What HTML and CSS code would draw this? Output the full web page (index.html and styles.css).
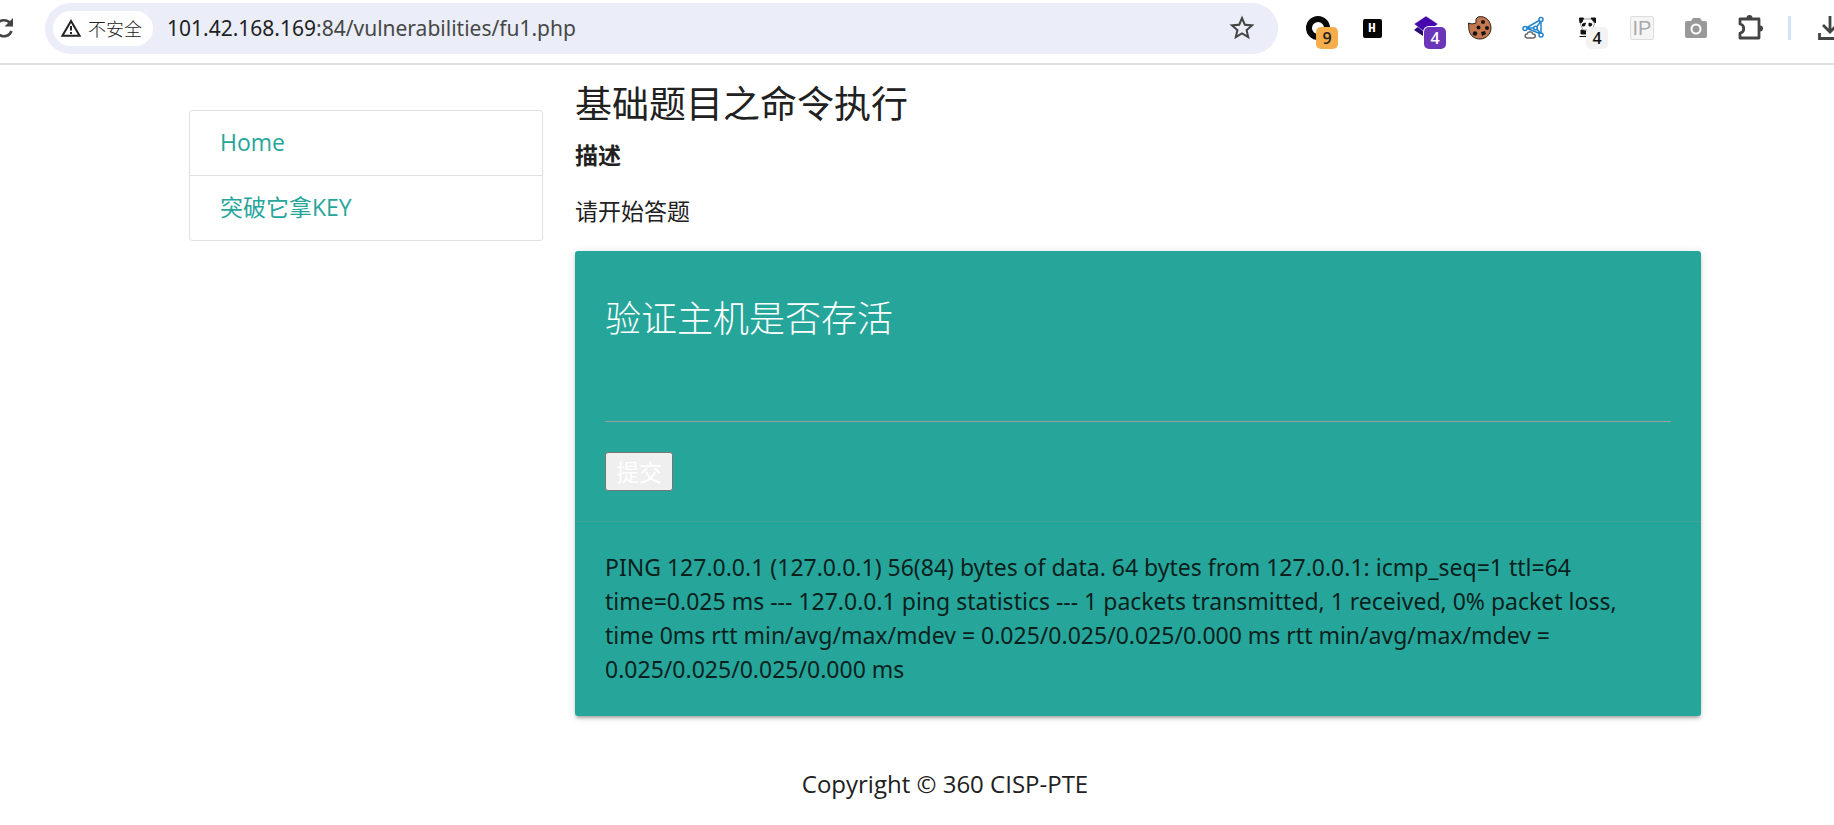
FILE: index.html
```html
<!DOCTYPE html>
<html lang="zh-CN">
<head>
    <meta charset="UTF-8">
    <meta name="viewport" content="width=device-width, initial-scale=1.0">
    <title>基础题目之命令执行</title>
    <link rel="stylesheet" href="styles.css">
</head>
<body>
    <header class="toolbar">
        <button class="tool reload" type="button" aria-label="重新加载">
            <svg width="14" height="24" viewBox="10 0 14 24"><path d="M20 7A8 8 0 1 0 21.500 15" fill="none" stroke="#444" stroke-width="2.600"/><path d="M23 2v8.500h-8.500z" fill="#444"/></svg>
        </button>
        <div class="omnibox">
            <button class="chip" type="button">
                <svg width="22" height="20" viewBox="0 0 22 20"><path d="M11 3L19.600 17.800H2.400z" fill="none" stroke="#222" stroke-width="2"/><path d="M11 8v4.600M11 14v2" stroke="#222" stroke-width="2"/></svg>
                不安全
            </button>
            <div class="url"><span class="host">101.42.168.169</span>:84/vulnerabilities/fu1.php</div>
            <button class="tool star" type="button" aria-label="收藏">
                <svg width="30" height="30" viewBox="0 0 24 24"><path fill="#444" d="M22 9.24l-7.19-.62L12 2 9.19 8.63 2 9.24l5.46 4.73L5.82 21 12 17.27 18.18 21l-1.63-7.03L22 9.24zM12 15.4l-3.76 2.27 1-4.28-3.32-2.88 4.38-.38L12 6.1l1.71 4.04 4.38.38-3.32 2.88 1 4.28L12 15.4z"/></svg>
            </button>
        </div>
        <div class="extensions">
            <button class="tool" type="button" aria-label="扩展 C">
                <svg width="24" height="24" viewBox="0 0 24 24"><circle cx="12" cy="12" r="9" fill="none" stroke="#080808" stroke-width="6"/></svg>
                <span class="badge orange">9</span>
            </button>
            <button class="tool" type="button" aria-label="HackBar"><span class="hack">H</span></button>
            <button class="tool" type="button" aria-label="Wappalyzer">
                <svg width="24" height="24" viewBox="0 0 24 24"><path d="M0 14l5-4 14 0 5 3-12 9z" fill="#2a0873"/><path d="M12 0l12 8-12 9L0 8z" fill="#4608ad" stroke="#fff" stroke-width=".5"/></svg>
                <span class="badge purple">4</span>
            </button>
            <button class="tool" type="button" aria-label="Cookie">
                <svg width="24" height="24" viewBox="0 0 24 24"><path d="M10 1C17-1 23 5 23 12c0 6-5 11-11 11C7 23 2 20 1 14l-.5-7L4 8l4-1V3z" fill="#c47850" stroke="#2d211d"/><g fill="#181211"><circle cx="15" cy="6" r="2"/><circle cx="19" cy="12" r="2"/><circle cx="10.500" cy="11.500" r="2"/><circle cx="7" cy="17.500" r="2.300"/><path d="M13 16l4-1 1 3-4 2z"/></g></svg>
            </button>
            <button class="tool" type="button" aria-label="代理">
                <svg width="24" height="24" viewBox="0 0 24 24" fill="none" stroke="#2585cc" stroke-width="1.500"><path d="M18 4L4 12l10 0 5-7v13l-5-6 5 6-15-6"/><g fill="#fff"><circle cx="19" cy="3.500" r="2"/><circle cx="3" cy="12.500" r="2"/><circle cx="13.500" cy="12" r="1.800"/><circle cx="19" cy="19" r="2"/></g><path d="M5 22c-3-1-2-4 0-4 1-3 5-3 6 0 3 0 3 4 0 4z" fill="#fff" stroke="#666"/></svg>
            </button>
            <button class="tool" type="button" aria-label="熊猫">
                <svg width="24" height="24" viewBox="0 0 24 24"><path d="M7 3h9l2.500 5-2.500 6H7L4.500 8z" fill="#fff" stroke="#999"/><path d="M3.500 2h4L6 6 4 7zM15 2h4.500v5l-3-3zM6.500 8l3-1-1 3h-2zM13 7l3 1-1 2h-2zM5 14l4 1 5 0v3H5zM3.500 20.500h7" fill="#111" stroke="#111"/></svg>
                <span class="badge pale">4</span>
            </button>
            <button class="tool" type="button" aria-label="IP"><span class="ip">IP</span></button>
            <button class="tool" type="button" aria-label="截图">
                <svg width="24" height="24" viewBox="0 0 24 24"><path d="M3 5h4l2-3h7l2 3h3q2 0 2 2v13q0 2-2 2H3q-2 0-2-2V7q0-2 2-2z" fill="#999"/><circle cx="12" cy="13" r="4.500" fill="#999" stroke="#fff" stroke-width="2"/></svg>
            </button>
            <button class="tool" type="button" aria-label="扩展程序">
                <svg width="28" height="28" viewBox="0 0 28 28"><path d="M4 5h19v19H4v-5c5-1 5-8 0-9z" fill="none" stroke="#444" stroke-width="2.800" stroke-linejoin="round"/><path d="M10.500 4a3 3 0 0 1 6 0zM24 11.500a3 3 0 0 1 0 6z" fill="#444"/></svg>
            </button>
        </div>
        <span class="separator"></span>
        <button class="tool download" type="button" aria-label="下载">
            <svg width="16" height="24" viewBox="0 0 16 24"><path d="M12 0v15M5 9l7 7 7-7M1.500 17v5.500H23" fill="none" stroke="#444" stroke-width="2.800"/></svg>
        </button>
    </header>

    <div class="container">
        <nav class="sidebar">
            <div class="collection">
                <a href="#">Home</a>
                <a href="#">突破它拿KEY</a>
            </div>
        </nav>
        <main class="content">
            <h1>基础题目之命令执行</h1>
            <p class="label">描述</p>
            <p class="intro">请开始答题</p>
            <div class="card">
                <form class="card-content">
                    <label class="card-title" for="ip">验证主机是否存活</label>
                    <input id="ip" type="text" name="ip">
                    <button class="submit" type="button">提交</button>
                </form>
                <div class="card-action">
                    PING 127.0.0.1 (127.0.0.1) 56(84) bytes of data. 64 bytes from 127.0.0.1: icmp_seq=1 ttl=64 time=0.025 ms --- 127.0.0.1 ping statistics --- 1 packets transmitted, 1 received, 0% packet loss, time 0ms rtt min/avg/max/mdev = 0.025/0.025/0.025/0.000 ms rtt min/avg/max/mdev = 0.025/0.025/0.025/0.000 ms
                </div>
            </div>
        </main>
        <footer>Copyright © 360 CISP-PTE</footer>
    </div>
</body>
</html>
```
FILE: styles.css
```css
* { box-sizing: border-box; }
body { margin: 0; background: #fff; color: #212121; font-family: "Open Sans", "Noto Sans CJK SC", sans-serif; font-size: 23px; line-height: 34px; overflow-x: hidden; }
button { font-family: inherit; cursor: pointer; }
svg { display: block; flex: none; }

/* browser bar */
.toolbar { display: flex; align-items: center; height: 65px; padding-bottom: 7px; border-bottom: 2px solid #dfdfdf; }
.tool { position: relative; display: flex; align-items: center; justify-content: center; padding: 0; border: 0; background: none; }
.omnibox { display: flex; flex: 1; align-items: center; height: 51px; margin-left: 31px; padding: 0 21px 0 8px; border-radius: 26px; background: #ebeef8; }
.chip { display: flex; align-items: center; gap: 6px; height: 35px; padding: 0 11px 0 7px; border: 0; border-radius: 18px; background: #fff; color: #222; font-size: 18px; font-weight: 300; }
.url { flex: 1; margin-left: 14px; color: #474747; font-family: "Noto Sans", sans-serif; font-size: 21px; line-height: 32px; }
.host { color: #1f1f1f; }
.extensions { display: flex; margin-left: 13px; }
.extensions .tool { width: 54px; height: 44px; }
.badge { position: absolute; left: 25px; top: 21px; width: 22px; height: 22px; border-radius: 5px; font-size: 16px; font-weight: 600; line-height: 22px; }
.orange { background: #f6ad4b; color: #222; }
.purple { background: #6a35b8; color: #fff; box-shadow: 0 0 0 1px #fff; }
.pale { background: #f3f3f3; color: #111; }
.hack { width: 19px; height: 19px; border-radius: 2px; background: #050505; color: #fff; font: bold 13px/19px "Liberation Mono", monospace; }
.ip { width: 24px; height: 24px; border: 1px solid #ddd; border-radius: 2px; background: #f5f5f5; color: #aaa; font: 20px/23px "Liberation Sans", sans-serif; }
.separator { width: 3px; height: 24px; margin: 0 27px 0 11px; background: #d3e3fd; }

/* page */
.container { display: grid; grid-template-columns: 3fr 9fr; margin: 0 117px 0 173px; }
.sidebar, .content { padding: 0 16px; }
.collection { margin-top: 45px; border: 1px solid #e0e0e0; border-radius: 3px; overflow: hidden; }
.collection a { display: block; padding: 14px 30px 16px; color: #26a69a; text-decoration: none; }
.collection a + a { border-top: 1px solid #e0e0e0; }
h1 { margin: 14px 0 9px; font-size: 37px; font-weight: 400; line-height: 50px; }
p { margin: 0; }
.label { font-weight: 700; }
.intro { margin: 22px 0 23px; }
.card { border-radius: 3px; background: #26a69a; box-shadow: 0 3px 3px rgba(0,0,0,0.14), 0 1px 8px rgba(0,0,0,0.12), 0 4px 2px -3px rgba(0,0,0,0.2); }
.card-content { display: flex; flex-direction: column; align-items: flex-start; padding: 30px; }
.card-title { color: #fff; font-size: 36px; font-weight: 300; line-height: 76px; }
.card input { width: 100%; height: 65px; border: 0; border-bottom: 1px solid #9e9e9e; background: none; color: #fff; font: inherit; outline: none; }
.submit { height: 39px; margin-top: 30px; padding: 0 10px; border: 1px solid #767676; border-radius: 3px; background: #efefef; color: #fff; font-size: 23px; line-height: 34px; }
.card-action { padding: 28px 36px 30px 30px; border-top: 1px solid rgba(160,160,160,0.2); color: #0b1f1d; font-family: "Noto Sans", sans-serif; }
footer { grid-column: 1 / -1; margin: 51px 0 23px; font-size: 24px; text-align: center; }
```
